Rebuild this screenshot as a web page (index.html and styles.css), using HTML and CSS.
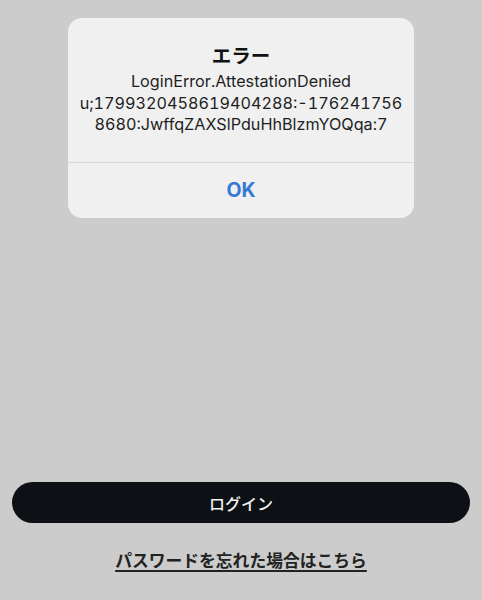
FILE: index.html
```html
<!DOCTYPE html>
<html lang="ja">
<head>
<meta charset="utf-8">
<title>ログイン</title>
<link rel="stylesheet" href="styles.css">
</head>
<body>
<main class="page">
  <div class="alert" role="alertdialog">
    <div class="alert-content">
      <h1 class="alert-title">エラー</h1>
      <p class="alert-message">LoginError.AttestationDenied<br>u;1799320458619404288:-176241756<br>8680:JwffqZAXSlPduHhBlzmYOQqa:7</p>
    </div>
    <button class="alert-button" type="button">OK</button>
  </div>
  <div class="actions">
    <button class="login-button" type="button">ログイン</button>
    <a class="forgot-link" href="#">パスワードを忘れた場合はこちら</a>
  </div>
</main>
</body>
</html>
```
FILE: styles.css
```css
* { box-sizing: border-box; }
html, body {
  margin: 0;
  padding: 0;
  background: #cccccc;
}
body {
  font-family: Inter, "Noto Sans CJK JP", sans-serif;
  color: #1a1a1a;
}
.page {
  min-height: 600px;
  display: flex;
  flex-direction: column;
  align-items: center;
  padding: 18px 12px 28px;
}
.alert {
  width: 346px;
  background: #f0f0f0;
  border-radius: 14px;
  display: flex;
  flex-direction: column;
  overflow: hidden;
}
.alert-content {
  padding: 24px 8px 26px;
  text-align: center;
  border-bottom: 1px solid #d7d7d7;
}
.alert-title {
  margin: 0;
  font-family: "Noto Sans CJK JP", sans-serif;
  font-size: 19.5px;
  font-weight: 700;
  line-height: 26px;
  color: #111;
}
.alert-message {
  margin: 3px 0 0;
  font-size: 16.2px;
  line-height: 21.5px;
  color: #1e1e1e;
  font-variant-numeric: tabular-nums;
}
.alert-button {
  height: 55px;
  border: 0;
  background: transparent;
  font-family: Inter, sans-serif;
  font-size: 19.5px;
  font-weight: 700;
  color: #3479d3;
  padding: 0;
}
.actions {
  margin-top: auto;
  width: 100%;
  display: flex;
  flex-direction: column;
  align-items: center;
}
.login-button {
  width: 100%;
  height: 41px;
  border: 0;
  border-radius: 21px;
  background: #0d1014;
  color: #f2f2f2;
  font-family: "Noto Sans CJK JP", sans-serif;
  font-size: 16px;
  font-weight: 500;
}
.forgot-link {
  margin-top: 25px;
  font-family: "Noto Sans CJK JP", sans-serif;
  font-size: 16.8px;
  font-weight: 700;
  line-height: 24px;
  color: #222;
  text-decoration: underline;
  text-underline-offset: 3px;
  text-decoration-thickness: 1.5px;
}
```
